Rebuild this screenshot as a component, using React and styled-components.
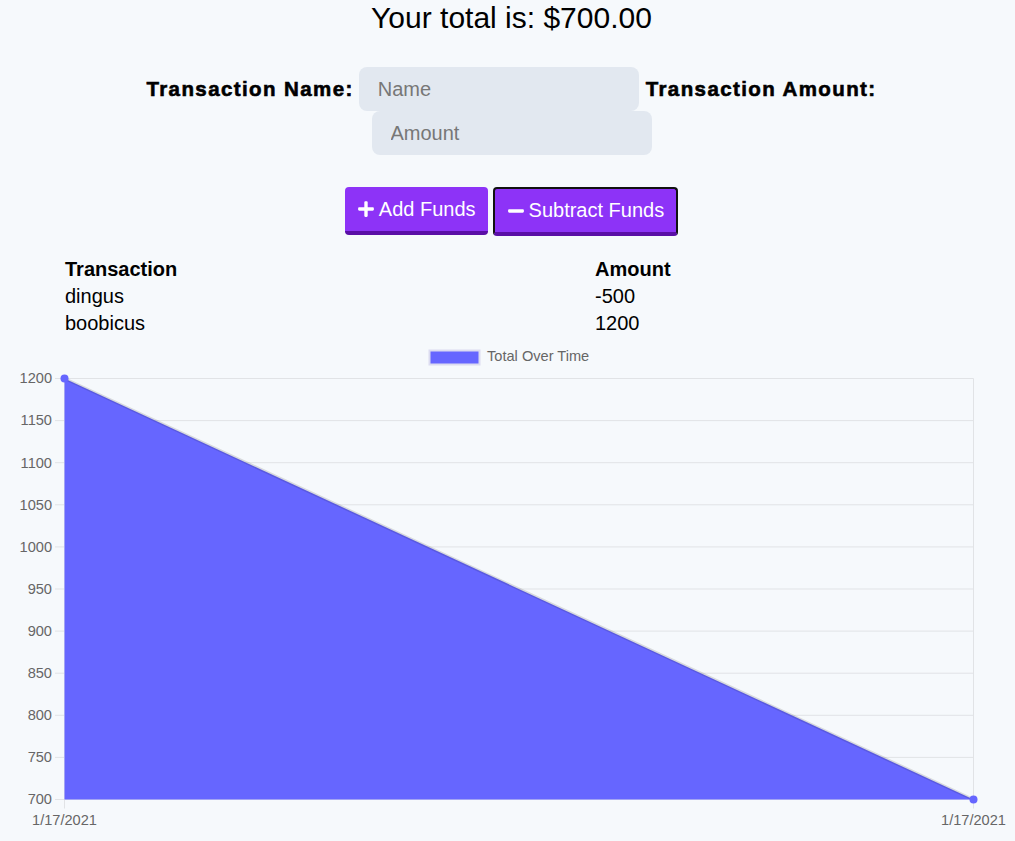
import React from 'react';
import styled, { createGlobalStyle } from 'styled-components';
import { FaPlus, FaMinus } from 'react-icons/fa';

const GlobalStyle = createGlobalStyle`
  html, body {
    margin: 0;
    padding: 0;
    background: #f6f9fc;
    font-family: "Liberation Sans", Arial, sans-serif;
    color: #000;
    overflow: hidden;
  }
`;

const transactions = [
  { name: 'dingus', value: -500 },
  { name: 'boobicus', value: 1200 },
];

const Top = styled.div`
  padding-left: 8px;
  display: flex;
  flex-direction: column;
  align-items: center;
`;

const Total = styled.h1`
  margin: 0;
  font-size: 30px;
  font-weight: normal;
  line-height: 36px;
`;

const Form = styled.form`
  margin-top: 31px;
  width: 750px;
  display: flex;
  flex-wrap: wrap;
  justify-content: center;
  align-items: center;
`;

const Label = styled.label`
  font-size: 20.5px;
  font-weight: bold;
  letter-spacing: 1.4px;
  -webkit-text-stroke: 0.6px #000;
  margin: 0 ${p => p.$right || 0}px 0 ${p => p.$left || 0}px;
`;

const Input = styled.input`
  box-sizing: border-box;
  width: 280px;
  height: 44px;
  border: none;
  border-radius: 8px;
  background: #e2e8f0;
  padding: 0 19px;
  font-family: "Liberation Sans", Arial, sans-serif;
  font-size: 20px;
  outline: none;
  &::placeholder {
    color: #777;
  }
`;

const Buttons = styled.div`
  margin-top: 32px;
  display: flex;
  gap: 5px;
`;

const Button = styled.button`
  box-sizing: border-box;
  height: ${p => (p.$focused ? 49 : 48)}px;
  padding: 0 12px;
  display: flex;
  align-items: center;
  gap: 4px;
  background: #8d33f7;
  color: #fff;
  font-family: "Liberation Sans", Arial, sans-serif;
  font-size: 20px;
  border: ${p => (p.$focused ? '2px solid #111' : 'none')};
  border-bottom: 4px solid #5a0fa6;
  border-radius: 4px;
  cursor: pointer;
  svg {
    font-size: 18px;
  }
`;

const Table = styled.div`
  margin-top: 20px;
  padding-left: 65px;
  display: grid;
  grid-template-columns: 530px auto;
  font-size: 20px;
`;

const Cell = styled.div`
  height: 27px;
  line-height: 27px;
  font-weight: ${p => (p.$head ? 'bold' : 'normal')};
`;

const ChartWrap = styled.div`
  margin-top: 8px;
  height: 496px;
`;

const W = 1015;
const H = 496;
const OFF = 345;
const L = 64.5;
const R = 973.5;
const T = 378.5 - OFF;
const B = 799.5 - OFF;
const yOf = v => T + ((1200 - v) / 500) * (B - T);

const Chart = () => {
  const ticks = [];
  for (let v = 1200; v >= 700; v -= 50) ticks.push(v);
  const text = { fontFamily: '"Liberation Sans", Arial, sans-serif', fontSize: 14.6, fill: '#666' };
  return (
    <svg width={W} height={H} viewBox={`0 0 ${W} ${H}`}>
      <rect x="429.5" y={350.5 - OFF} width="50" height="14" fill="#6666ff" stroke="#dcdcf0" strokeWidth="2" />
      <text x="487" y={357 - OFF} dominantBaseline="middle" {...text}>Total Over Time</text>
      {ticks.map(v => (
        <g key={v}>
          <line x1={55} x2={R} y1={yOf(v)} y2={yOf(v)} stroke="#e1e3e6" strokeWidth="1" />
          <text x="52" y={yOf(v) + 1} textAnchor="end" dominantBaseline="middle" {...text}>{v}</text>
        </g>
      ))}
      <line x1={L} x2={L} y1={T} y2={B + 9} stroke="#e1e3e6" />
      <line x1={R} x2={R} y1={T} y2={B + 9} stroke="#e1e3e6" />
      <polygon points={`${L},${yOf(1200)} ${R},${yOf(700)} ${L},${B}`} fill="#6666ff" />
      <line x1={L} y1={yOf(1200)} x2={R} y2={yOf(700)} stroke="rgba(0,0,0,0.12)" strokeWidth="3" />
      <circle cx={L} cy={yOf(1200)} r="4" fill="#6666ff" />
      <circle cx={R} cy={yOf(700)} r="4" fill="#6666ff" />
      <text x={L} y={821 - OFF} textAnchor="middle" dominantBaseline="middle" {...text}>1/17/2021</text>
      <text x={R} y={821 - OFF} textAnchor="middle" dominantBaseline="middle" {...text}>1/17/2021</text>
    </svg>
  );
};

export default function App() {
  return (
    <>
      <GlobalStyle />
      <Top>
        <Total>Your total is: $700.00</Total>
        <Form onSubmit={e => e.preventDefault()}>
          <Label $right={5}>Transaction Name:</Label>
          <Input placeholder="Name" />
          <Label $left={7}>Transaction Amount:</Label>
          <Input placeholder="Amount" />
        </Form>
        <Buttons>
          <Button type="button"><FaPlus /> Add Funds</Button>
          <Button type="button" $focused><FaMinus /> Subtract Funds</Button>
        </Buttons>
      </Top>
      <Table>
        <Cell $head>Transaction</Cell>
        <Cell $head>Amount</Cell>
        {transactions.map(t => (
          <React.Fragment key={t.name}>
            <Cell>{t.name}</Cell>
            <Cell>{t.value}</Cell>
          </React.Fragment>
        ))}
      </Table>
      <ChartWrap>
        <Chart />
      </ChartWrap>
    </>
  );
}
